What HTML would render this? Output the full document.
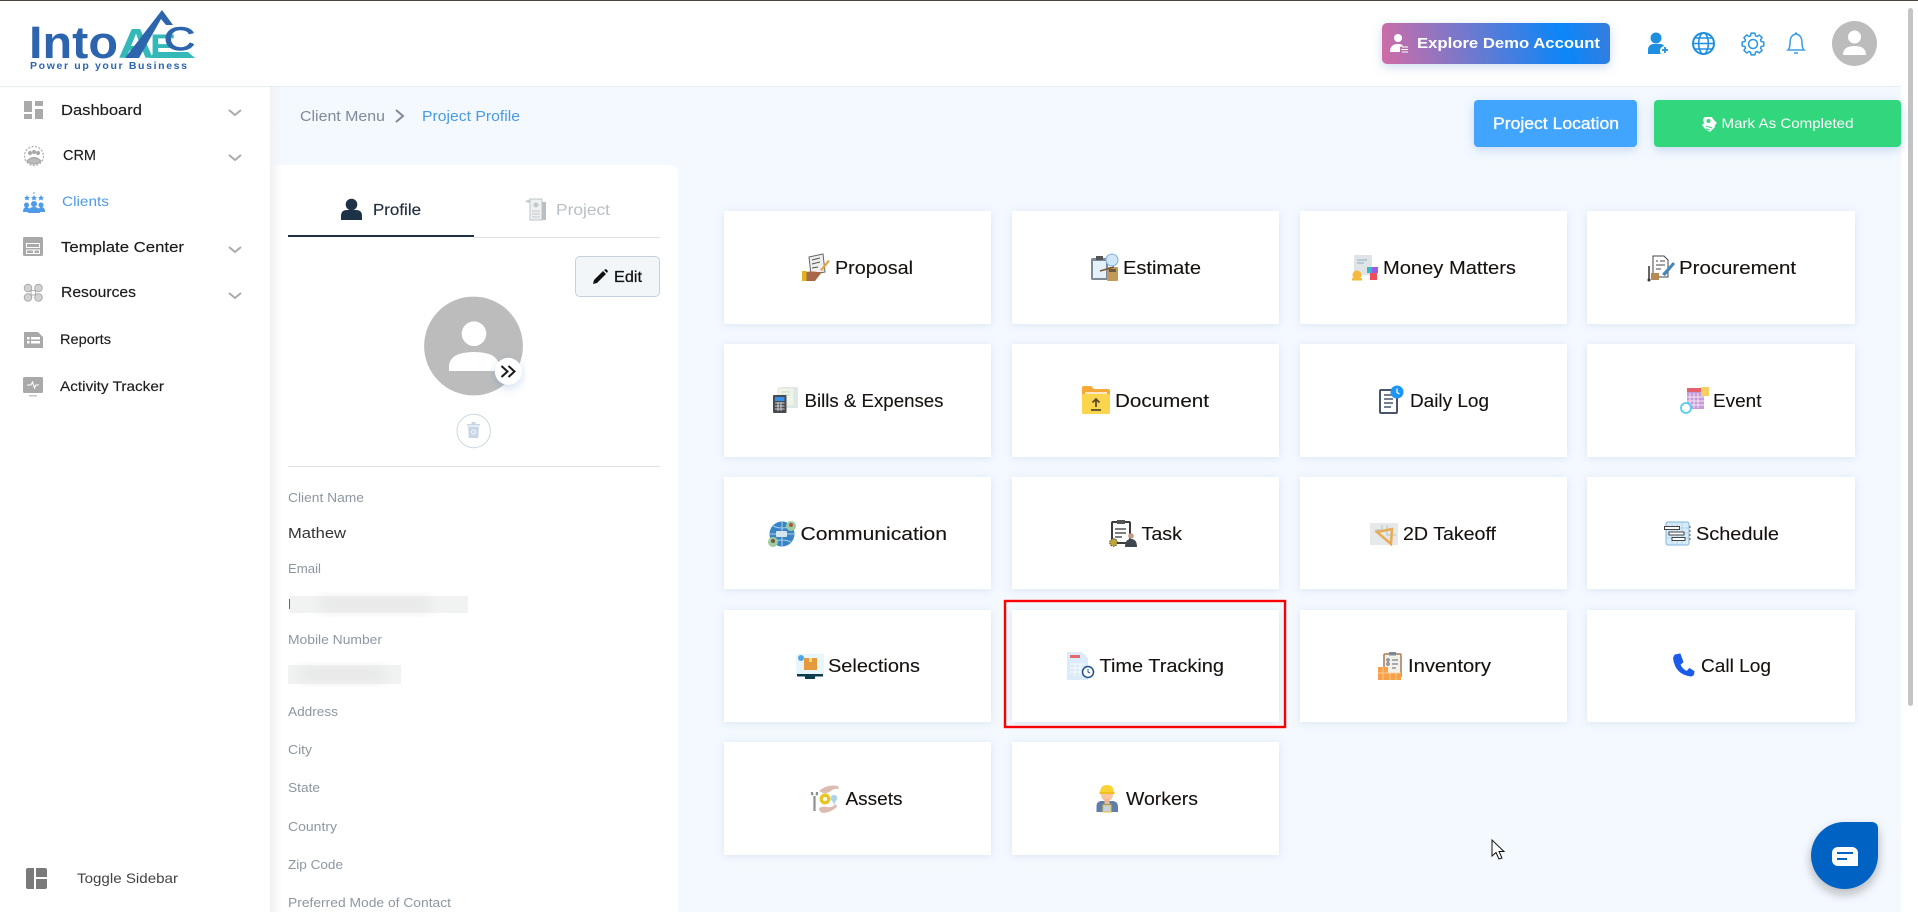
<!DOCTYPE html>
<html lang="en"><head><meta charset="utf-8"><title>Project Profile</title>
<style>
html,body{margin:0;padding:0;background:#fff;overflow:hidden;width:1918px;height:912px}
svg{display:block}
text{font-family:"Liberation Sans",sans-serif}
.c{font-size:18.5px;fill:#17120f;stroke:#17120f;stroke-width:.12px}
.s{font-size:15px;fill:#1c1c1c;stroke:#1c1c1c;stroke-width:.15px}
.l{font-size:13px;fill:#8d97a1}
</style></head><body>
<svg width="1918" height="912" viewBox="0 0 1918 912" xmlns="http://www.w3.org/2000/svg">
<defs>
<filter id="card" x="-15%" y="-15%" width="130%" height="135%"><feDropShadow dx="0" dy="1" stdDeviation="4" flood-color="#7d97b5" flood-opacity=".22"/></filter>
<filter id="btn" x="-15%" y="-30%" width="130%" height="180%"><feDropShadow dx="0" dy="3" stdDeviation="5" flood-color="#4a80c8" flood-opacity=".28"/></filter>
<filter id="chat" x="-30%" y="-30%" width="160%" height="170%"><feDropShadow dx="0" dy="5" stdDeviation="5" flood-color="#222" flood-opacity=".3"/></filter>
<filter id="bl" x="-10%" y="-50%" width="120%" height="200%"><feGaussianBlur stdDeviation="6"/></filter>
<linearGradient id="ex" gradientUnits="userSpaceOnUse" x1="1385" y1="72" x2="1612" y2="22"><stop offset="0" stop-color="#d06ca6"/><stop offset=".78" stop-color="#0a86f8"/><stop offset="1" stop-color="#3a7cdc"/></linearGradient>
<linearGradient id="sh" x1="0" x2="1"><stop offset="0" stop-color="#f0f1f2"/><stop offset="1" stop-color="#f0f1f2" stop-opacity="0"/></linearGradient>
</defs>

<!-- backgrounds -->
<rect width="1918" height="912" fill="#fff"/>
<rect x="270" y="87" width="1631" height="825" fill="#f4f9ff"/>
<rect x="0" y="0" width="1918" height="1" fill="#4a4441"/>
<rect x="0" y="86" width="1901" height="1" fill="#e8edf2"/>
<rect x="1908" y="8" width="5" height="698" rx="2.5" fill="#c4c4c4"/>

<!-- logo -->
<text x="29" y="58" font-size="45" font-weight="700" fill="#2c65ad" textLength="89" lengthAdjust="spacingAndGlyphs">Into</text>
<text x="118" y="58" font-size="42" font-weight="700" fill="#35b8b8" textLength="36" lengthAdjust="spacingAndGlyphs">A</text>
<text x="150" y="58" font-size="34" font-weight="700" fill="#35b8b8" textLength="26" lengthAdjust="spacingAndGlyphs">E</text>
<text x="164" y="50" font-size="32" fill="#2c65ad" stroke="#2c65ad" stroke-width="1" textLength="31" lengthAdjust="spacingAndGlyphs">C</text>
<polygon points="125,58 162,10 173,25 166,25 161,19 139,58" fill="#2c65ad"/>
<polygon points="150,58 195,58 188,52 154,52" fill="#35b8b8"/>
<text x="30" y="69" font-size="10.500" font-weight="700" fill="#2c65ad" textLength="157" lengthAdjust="spacing">Power up your Business</text>

<!-- sidebar -->
<g fill="#aaa">
<rect x="24" y="101" width="8" height="11"/><rect x="35" y="101" width="8" height="5"/><rect x="24" y="114" width="8" height="5"/><rect x="35" y="109" width="8" height="10"/>
</g>
<text class="s" x="61" y="115" textLength="81" lengthAdjust="spacingAndGlyphs">Dashboard</text>
<path d="M229 110l6 5 6-5" fill="none" stroke="#aaa" stroke-width="2"/>
<g fill="none" stroke="#aaa" stroke-width="1.200">
<circle cx="34" cy="156" r="9.500" stroke-dasharray="2 1.500"/><path d="M27 161q7-7 14 0q-7 6-14 0z" fill="#bbb"/><circle cx="30" cy="153" r="1.500" fill="#aaa"/><circle cx="34" cy="152" r="1.500" fill="#aaa"/><circle cx="38" cy="153" r="1.500" fill="#aaa"/>
</g>
<text class="s" x="63" y="160" textLength="33" lengthAdjust="spacingAndGlyphs">CRM</text>
<path d="M229 155l6 5 6-5" fill="none" stroke="#aaa" stroke-width="2"/>
<g fill="#4e9ae8">
<circle cx="34" cy="193" r=".8"/><path d="M27 195l1 2 2 .2-1.500 1.300.5 2-2-1-2 1 .5-2-1.500-1.300 2-.2z"/><path d="M34 195l1 2 2 .2-1.500 1.300.5 2-2-1-2 1 .5-2-1.500-1.300 2-.2z"/><path d="M41 195l1 2 2 .2-1.500 1.300.5 2-2-1-2 1 .5-2-1.500-1.300 2-.2z"/>
<circle cx="26.500" cy="205" r="2.500"/><circle cx="41" cy="205" r="2.500"/><circle cx="34" cy="204" r="3"/>
<path d="M23 212q0-5 3.500-5t3.500 5zM38 212q0-5 3.500-5t3.500 5zM28 213q0-6 6-6t6 6z"/>
</g>
<text x="62" y="206" font-size="14" fill="#4e9ae8" textLength="47" lengthAdjust="spacingAndGlyphs">Clients</text>
<rect x="23" y="237" width="20" height="19" rx="1.500" fill="#a9a9a9"/><rect x="26" y="243" width="14" height="5" fill="#fff"/><rect x="27" y="244" width="12" height="3" fill="#a9a9a9"/><rect x="26" y="249.500" width="14" height="4.500" fill="#fff"/><rect x="27" y="250.500" width="6" height="2.500" fill="#a9a9a9"/><rect x="34.500" y="250.500" width="4.500" height="2.500" fill="#a9a9a9"/>
<text class="s" x="61" y="252" textLength="123" lengthAdjust="spacingAndGlyphs">Template Center</text>
<path d="M229 247l6 5 6-5" fill="none" stroke="#aaa" stroke-width="2"/>
<g fill="#d2d2d2" stroke="#a5a5a5" stroke-width=".9"><circle cx="28" cy="288" r="3.800"/><circle cx="38.500" cy="288" r="3.800"/><circle cx="28" cy="297.500" r="3.800"/><circle cx="38.500" cy="297.500" r="3.800"/><rect x="31" y="290.500" width="4.500" height="4.500" fill="#fff"/></g>
<text class="s" x="61" y="297" textLength="75" lengthAdjust="spacingAndGlyphs">Resources</text>
<path d="M229 293l6 5 6-5" fill="none" stroke="#aaa" stroke-width="2"/>
<path d="M24 332h14l5 5v11H24z" fill="#a9a9a9"/><path d="M27 337h2.500v2.500H27zM27 341h2.500v2.500H27zM31 337h9v2.500h-9zM31 341h9v2.500h-9z" fill="#fff"/>
<text class="s" x="60" y="344" style="font-size:14px" textLength="51" lengthAdjust="spacingAndGlyphs">Reports</text>
<rect x="23" y="377" width="20" height="16" rx="1.500" fill="#a9a9a9"/><path d="M27 385h4l1.500-3 2 6 1.500-3h3" fill="none" stroke="#fff" stroke-width="1.100"/><rect x="29" y="395" width="8" height="1.500" fill="#c5c5c5"/>
<text class="s" x="60" y="391" style="font-size:14px" textLength="104" lengthAdjust="spacingAndGlyphs">Activity Tracker</text>
<path d="M28 868h6v21h-6a2 2 0 0 1-2-2v-17a2 2 0 0 1 2-2zM36 868h9a2 2 0 0 1 2 2v7H36zM36 879h11v8a2 2 0 0 1-2 2h-9z" fill="#7a7a7a"/>
<text x="77" y="883" font-size="14" fill="#444" textLength="101" lengthAdjust="spacingAndGlyphs">Toggle Sidebar</text>

<!-- header -->
<rect x="1382" y="23" width="228" height="41" rx="5" fill="url(#ex)" filter="url(#btn)"/>
<circle cx="1398" cy="38" r="4" fill="#fff"/><path d="M1390 52q0-8 8-8 4 0 5 2l-3 1v5z" fill="#fff"/><path d="M1402 47h6M1401 49.500h7M1402 52h6" stroke="#fff" stroke-width="1"/>
<text x="1417" y="48" font-size="14.500" font-weight="700" fill="#fff" textLength="183" lengthAdjust="spacingAndGlyphs">Explore Demo Account</text>
<circle cx="1656" cy="38" r="5.500" fill="#1e8fe0"/><path d="M1648 54v-4q0-6 6-6h6q3 0 4 2-4 1-4 5 0 2 1 3z" fill="#1e8fe0"/><path d="M1665 47v6M1662 50h6" stroke="#1e8fe0" stroke-width="1.800"/>
<g fill="none" stroke="#1e8fe0" stroke-width="2"><circle cx="1703.500" cy="43.500" r="10.500"/><ellipse cx="1703.500" cy="43.500" rx="4.800" ry="10.500" stroke-width="1.600"/><path d="M1693 43.500h21M1695 38h17M1695 49h17" stroke-width="1.600"/></g>
<g transform="translate(1753 44)" fill="none" stroke="#2a96e4" stroke-width="1.500" stroke-linejoin="round"><polygon points="8.130,-2.490 10.830,-1.910 10.830,1.910 8.130,2.490 7.500,3.990 9.010,6.310 6.310,9.010 3.990,7.500 2.490,8.130 1.910,10.830 -1.910,10.830 -2.490,8.130 -3.990,7.500 -6.310,9.010 -9.010,6.310 -7.500,3.990 -8.130,2.490 -10.830,1.910 -10.830,-1.910 -8.130,-2.490 -7.500,-3.990 -9.010,-6.310 -6.310,-9.010 -3.990,-7.500 -2.490,-8.130 -1.910,-10.830 1.910,-10.830 2.490,-8.130 3.990,-7.500 6.310,-9.010 9.010,-6.310 7.500,-3.990"/><circle r="4.500"/></g>
<path d="M1788 50q2-2 2-7 0-8 6-9 6 1 6 9 0 5 2 7zM1794 53h4" fill="none" stroke="#3a9de4" stroke-width="1.500"/><circle cx="1796" cy="33.500" r="1.200" fill="#3a9de4"/>
<circle cx="1854.500" cy="43.500" r="22.500" fill="#bcbcbc"/><circle cx="1854.500" cy="37" r="6.500" fill="#fff"/><path d="M1843 55q0-9 11.500-9t11.500 9z" fill="#fff"/>

<!-- breadcrumb -->
<text x="300" y="121" font-size="14.500" fill="#7f8a96" textLength="85" lengthAdjust="spacingAndGlyphs">Client Menu</text>
<path d="M396 110l7 6-7 6" fill="none" stroke="#7f8a96" stroke-width="2"/>
<text x="422" y="121" font-size="14.500" fill="#4a9ae6" textLength="98" lengthAdjust="spacingAndGlyphs">Project Profile</text>

<!-- top buttons -->
<rect x="1474" y="100" width="163" height="47" rx="4" fill="#42a5fd" filter="url(#btn)"/>
<text x="1493" y="129" font-size="16.500" fill="#fff" stroke="#fff" stroke-width=".3" textLength="126" lengthAdjust="spacingAndGlyphs">Project Location</text>
<rect x="1654" y="100" width="247" height="47" rx="4" fill="#32d67c" filter="url(#btn)"/>
<path d="M1705 117h7l1 2 4 4-2 2v2l-3 3-2 2-5-3-3-4 2-2-1-4z" fill="#fff"/><circle cx="1708.500" cy="121" r="2" fill="#32d67c"/><path d="M1706 126l6 2M1706 129l4 1" stroke="#32d67c"/>
<text x="1721.500" y="128" font-size="14" fill="#fff" textLength="132" lengthAdjust="spacingAndGlyphs">Mark As Completed</text>

<!-- profile panel -->
<path d="M270 165h400a8 8 0 0 1 8 8v739H270z" fill="#fff"/>
<rect x="270" y="87" width="12" height="825" fill="url(#sh)"/>
<circle cx="351.500" cy="204.500" r="5.800" fill="#1d3147"/><path d="M341 220v-4q0-6 6-6h9q6 0 6 6v4z" fill="#1d3147"/>
<text x="373" y="215" font-size="16" fill="#1f2d3d" stroke="#1f2d3d" stroke-width=".15" textLength="48" lengthAdjust="spacingAndGlyphs">Profile</text>
<path d="M525 201l6-2v3l-3 1z" fill="#c9cdd1"/><rect x="530" y="199" width="12" height="21" fill="#eef0f1" stroke="#bfc4c9"/><rect x="542" y="202" width="4" height="18" fill="#b9bfc5"/><circle cx="536" cy="205" r="2.500" fill="#c2c7cc"/><path d="M532 211h8M532 214h8M532 217h8" stroke="#c2c7cc"/>
<text x="556" y="215" font-size="16" fill="#b8bec5" textLength="54" lengthAdjust="spacingAndGlyphs">Project</text>
<rect x="474" y="237" width="186" height="1" fill="#dfe2e5"/><rect x="288" y="235" width="186" height="2" fill="#1f3044"/>
<rect x="575.500" y="256.500" width="84" height="40" rx="4.500" fill="#f2f6f9" stroke="#c5d0dc"/>
<path d="M593 284l1-4 9-9 3 3-9 9zM604 270l2-1 2 2-1 2z" fill="#111"/>
<text x="614" y="282" font-size="16" fill="#111" stroke="#111" stroke-width=".25" textLength="28" lengthAdjust="spacingAndGlyphs">Edit</text>
<circle cx="473.500" cy="346" r="49.400" fill="#bcbcbc"/><circle cx="474" cy="333.700" r="12.300" fill="#fff"/><path d="M449 371v-6q2-13 25-13t25 13v6z" fill="#fff"/>
<circle cx="508.300" cy="371.300" r="13.500" fill="#fff" filter="url(#btn)"/><path d="M501.500 366l6 5.500-6 5.500M508.500 366l6 5.500-6 5.500" fill="none" stroke="#1a1a1a" stroke-width="2"/>
<circle cx="473.700" cy="431" r="16.700" fill="#fff" stroke="#c9d6e3"/>
<path d="M467 424h13v1.500h-13zM471.500 422h4v2h-4zM468 426.500h11l-.8 11.500h-9.400z" fill="#c9d6e6"/><circle cx="473.500" cy="432" r="2" fill="none" stroke="#fff" stroke-width=".8"/>
<rect x="288" y="466" width="372" height="1" fill="#dfe2e5"/>

<text class="l" x="288" y="502" textLength="76" lengthAdjust="spacingAndGlyphs">Client Name</text>
<text x="288" y="538" font-size="15" fill="#333" textLength="58" lengthAdjust="spacingAndGlyphs">Mathew</text>
<text class="l" x="288" y="573" textLength="33" lengthAdjust="spacingAndGlyphs">Email</text>
<rect x="289" y="599" width="1" height="10" fill="#666"/>
<rect x="290" y="596" width="178" height="17" fill="#f1f2f2"/><rect x="320" y="598" width="110" height="13" fill="#e3e4e4" filter="url(#bl)" opacity=".8"/>
<text class="l" x="288" y="644" textLength="94" lengthAdjust="spacingAndGlyphs">Mobile Number</text>
<rect x="288" y="665" width="113" height="19" fill="#f1f2f2"/><rect x="300" y="668" width="85" height="13" fill="#e3e4e4" filter="url(#bl)" opacity=".8"/>
<text class="l" x="288" y="716" textLength="50" lengthAdjust="spacingAndGlyphs">Address</text>
<text class="l" x="288" y="754" textLength="24" lengthAdjust="spacingAndGlyphs">City</text>
<text class="l" x="288" y="792" textLength="32" lengthAdjust="spacingAndGlyphs">State</text>
<text class="l" x="288" y="831" textLength="49" lengthAdjust="spacingAndGlyphs">Country</text>
<text class="l" x="288" y="869" textLength="55" lengthAdjust="spacingAndGlyphs">Zip Code</text>
<text class="l" x="288" y="907" textLength="163" lengthAdjust="spacingAndGlyphs">Preferred Mode of Contact</text>

<!-- cards -->
<g fill="#fff" filter="url(#card)">
<rect x="724" y="211" width="267" height="113"/><rect x="1012" y="211" width="267" height="113"/><rect x="1300" y="211" width="267" height="113"/><rect x="1587" y="211" width="268" height="113"/>
<rect x="724" y="344" width="267" height="113"/><rect x="1012" y="344" width="267" height="113"/><rect x="1300" y="344" width="267" height="113"/><rect x="1587" y="344" width="268" height="113"/>
<rect x="724" y="477" width="267" height="112"/><rect x="1012" y="477" width="267" height="112"/><rect x="1300" y="477" width="267" height="112"/><rect x="1587" y="477" width="268" height="112"/>
<rect x="724" y="610" width="267" height="112"/><rect x="1012" y="610" width="267" height="112"/><rect x="1300" y="610" width="267" height="112"/><rect x="1587" y="610" width="268" height="112"/>
<rect x="724" y="742" width="267" height="113"/><rect x="1012" y="742" width="267" height="113"/>
</g>
<rect x="1005" y="601" width="280" height="126" fill="none" stroke="#ff0000" stroke-width="2.400"/>

<!-- card labels -->
<text class="c" x="835" y="274" textLength="78" lengthAdjust="spacingAndGlyphs">Proposal</text>
<text class="c" x="1123" y="274" textLength="78" lengthAdjust="spacingAndGlyphs">Estimate</text>
<text class="c" x="1383" y="274" textLength="133" lengthAdjust="spacingAndGlyphs">Money Matters</text>
<text class="c" x="1679" y="274" textLength="117" lengthAdjust="spacingAndGlyphs">Procurement</text>
<text class="c" x="804.500" y="407" textLength="139" lengthAdjust="spacingAndGlyphs">Bills &amp; Expenses</text>
<text class="c" x="1115" y="407" textLength="94" lengthAdjust="spacingAndGlyphs">Document</text>
<text class="c" x="1410" y="407" textLength="79" lengthAdjust="spacingAndGlyphs">Daily Log</text>
<text class="c" x="1713" y="407" textLength="48.500" lengthAdjust="spacingAndGlyphs">Event</text>
<text class="c" x="800.500" y="540" textLength="146.500" lengthAdjust="spacingAndGlyphs">Communication</text>
<text class="c" x="1141.500" y="540" textLength="40.500" lengthAdjust="spacingAndGlyphs">Task</text>
<text class="c" x="1403" y="540" textLength="93" lengthAdjust="spacingAndGlyphs">2D Takeoff</text>
<text class="c" x="1696" y="540" textLength="83" lengthAdjust="spacingAndGlyphs">Schedule</text>
<text class="c" x="828" y="672" textLength="92" lengthAdjust="spacingAndGlyphs">Selections</text>
<text class="c" x="1099.500" y="672" textLength="124.500" lengthAdjust="spacingAndGlyphs">Time Tracking</text>
<text class="c" x="1408" y="672" textLength="83" lengthAdjust="spacingAndGlyphs">Inventory</text>
<text class="c" x="1701" y="672" textLength="70" lengthAdjust="spacingAndGlyphs">Call Log</text>
<text class="c" x="845.500" y="805" textLength="57" lengthAdjust="spacingAndGlyphs">Assets</text>
<text class="c" x="1126" y="805" textLength="72" lengthAdjust="spacingAndGlyphs">Workers</text>

<!-- card icons -->
<!-- proposal -->
<path d="M809 257l14-3 2 18-14 3z" fill="#eee" stroke="#666"/><path d="M812 260l8-2M812 264l8-2M812 268l6-1" stroke="#555"/><path d="M820 270l8-10 2 1-8 10z" fill="#e8a33c"/><path d="M805 272q8-1 12 0l5 0-7 9h-9z" fill="#a8694a"/><rect x="802" y="271" width="4.500" height="10" fill="#e2b21c"/>
<!-- estimate -->
<rect x="1091" y="258" width="17" height="22" rx="1.500" fill="#7e8a96"/><rect x="1093" y="261" width="13" height="17" fill="#e4f0fa"/><rect x="1096" y="256" width="7" height="4" fill="#555"/><circle cx="1112" cy="260" r="6" fill="#cfe6f7" stroke="#7fb2dc"/><rect x="1107" y="267" width="11" height="14" rx="1" fill="#c49a5a"/><rect x="1109" y="269" width="7" height="3" fill="#6a5a40"/><path d="M1100 271l14-4" stroke="#7a5a3a" stroke-width="1.500"/>
<!-- money matters -->
<rect x="1354" y="255" width="18" height="20" fill="#dfe4e6"/><path d="M1357 260h10M1357 263h7" stroke="#8fb2c8"/><rect x="1367" y="267" width="6" height="6" fill="#36b7c4"/><rect x="1372" y="267" width="6" height="6" fill="#9a5ce6"/><rect x="1370" y="273" width="7" height="7" fill="#ee4e58"/><circle cx="1357" cy="275" r="4.500" fill="#f5b93f"/><rect x="1352" y="278" width="10" height="2.500" fill="#f5b93f"/>
<!-- procurement -->
<path d="M1653 256h11l4 4v17h-15z" fill="#fff" stroke="#444"/><path d="M1656 261h2M1660 261h5M1656 265h9M1656 269h5" stroke="#444"/><path d="M1662 274l11-12 2 2-10 12z" fill="#4587b8"/><rect x="1651" y="273" width="8" height="7" fill="#b58a55"/><path d="M1649 266v14" stroke="#333" stroke-width="1.500"/><circle cx="1649" cy="280" r="1.500" fill="#333"/>
<!-- bills -->
<rect x="781" y="387" width="17" height="21" fill="#dde9e4"/><rect x="778" y="388" width="16" height="18" fill="#f0f3ea" stroke="#dfe6dc"/><path d="M781 392h9M781 395h9" stroke="#c8d8c8"/><rect x="773" y="395" width="13.500" height="18" rx="1" fill="#474a4f"/><rect x="775" y="397" width="9.500" height="4" fill="#3a8fe8"/><path d="M775 403h9.500M775 406h9.500M775 409h9.500M778 402v9M781 402v9" stroke="#cfd3d6"/>
<!-- document -->
<path d="M1082 388a2 2 0 0 1 2-2h7l3 3h14a2 2 0 0 1 2 2v10h-28z" fill="#f7a937"/><rect x="1085" y="392" width="22" height="3" fill="#fde6c0"/><rect x="1082" y="394" width="28" height="20" rx="1.500" fill="#fcd54f"/><path d="M1096 399v8M1092.500 402.500l3.500-3.500 3.500 3.500M1091 410h10" fill="none" stroke="#5a4a2a" stroke-width="1.800"/>
<!-- daily log -->
<rect x="1380" y="390" width="17" height="23" rx="1" fill="#fff" stroke="#47566b" stroke-width="2"/><path d="M1384 395h8M1384 399h9M1384 403h9M1384 407h7" stroke="#47566b" stroke-width="1.400"/><circle cx="1397" cy="392" r="6.500" fill="#1c96f2"/><path d="M1397 388.500v4l2.500 1.500" fill="none" stroke="#fff" stroke-width="1.200"/>
<!-- event -->
<rect x="1687" y="389" width="17" height="20" fill="#c79ad8"/><rect x="1687" y="388" width="17" height="4" fill="#e4606a"/><path d="M1690 393v15M1694 393v15M1698 393v15M1687 397h17M1687 401h17M1687 405h17" stroke="#fff" stroke-width=".7"/><rect x="1701" y="387" width="8" height="9" fill="#f6cf62"/><circle cx="1686" cy="408" r="5" fill="#fff" stroke="#55cdf2" stroke-width="1.800"/>
<!-- communication -->
<circle cx="782" cy="534" r="12.500" fill="#3a83c4"/><path d="M770 534h24M782 522v24M773 526q9 4 18 0M773 542q9-4 18 0" stroke="#a9d0ee" fill="none"/><rect x="776" y="531" width="11" height="6" rx="1" fill="#d8e4ee"/><circle cx="791" cy="526" r="5" fill="#9fcba0"/><circle cx="791" cy="525" r="2" fill="#a65a44"/><circle cx="773" cy="542" r="5" fill="#9fcba0"/><circle cx="773" cy="541" r="2" fill="#7a5a3a"/>
<!-- task -->
<rect x="1112" y="522" width="18" height="21" rx="1" fill="#fff" stroke="#3c3c3c" stroke-width="2"/><rect x="1117" y="520" width="8" height="4" fill="#555"/><path d="M1115 529h11M1115 533h11M1115 537h7" stroke="#333" stroke-width="1.300"/><circle cx="1113.500" cy="542.500" r="3.800" fill="#c3a534" stroke="#444" stroke-dasharray="1.500 1"/><circle cx="1131" cy="536" r="2.800" fill="#c59a80"/><path d="M1125 547q0-8 6-8t6 8z" fill="#3e4650"/>
<!-- 2d takeoff -->
<rect x="1370" y="523" width="28" height="22" fill="#e6e9ea"/><path d="M1375 530h7v-5M1387 525v10h9" fill="none" stroke="#b8bec2"/><path d="M1377 532l15-3-1 15z" fill="none" stroke="#e9ac55" stroke-width="2.500"/>
<!-- schedule -->
<rect x="1666" y="522" width="23" height="23" rx="2" fill="#d8ebf8" stroke="#7fb6e0"/><path d="M1672 523v21M1677 523v21M1682 523v21M1667 528h21M1667 533h21M1667 538h21" stroke="#a9cfea" stroke-width=".7"/><g fill="#fff" stroke="#444"><rect x="1664.500" y="526.500" width="15" height="3"/><rect x="1669" y="532" width="15" height="3"/><rect x="1672" y="537.500" width="13" height="3"/></g><path d="M1690 526v16" stroke="#666" stroke-dasharray="2 2"/>
<!-- selections -->
<rect x="796" y="654" width="28" height="20" rx="1" fill="#e8f5fb"/><rect x="797" y="674" width="26" height="2.500" fill="#0d3c4f"/><rect x="805" y="676" width="10" height="3" fill="#0d3c4f"/><rect x="804" y="658" width="13" height="12" fill="#e59b3d"/><rect x="809" y="658" width="3" height="4" fill="#f8dc7a"/><circle cx="801" cy="658" r="3" fill="#4fa6e6"/>
<!-- time tracking -->
<path d="M1067 652h15l6 6v22h-21z" fill="#dcebfa"/><rect x="1070" y="655" width="10" height="3" fill="#e56a6e"/><path d="M1070 664h15M1070 668h15M1070 672h15M1075 664v12M1080 664v12" stroke="#fff" stroke-width=".8"/><circle cx="1088" cy="672" r="5.500" fill="#fff" stroke="#1f4f90" stroke-width="1.500"/><path d="M1088 669v3l2 1" fill="none" stroke="#1f4f90"/>
<!-- inventory -->
<rect x="1384" y="654" width="17" height="23" rx="1" fill="#f3f0ea" stroke="#a97a52" stroke-width="1.500"/><rect x="1389" y="652" width="7" height="3.500" fill="#7a8a9a"/><path d="M1392 660h6M1392 664h6M1392 668h4" stroke="#5a6a7a"/><circle cx="1388" cy="660" r="1.200" fill="none" stroke="#5a6a7a"/><circle cx="1388" cy="664" r="1.200" fill="none" stroke="#5a6a7a"/><path d="M1378 667h10v6h13v7h-23z" fill="#f6a04a"/><path d="M1378 673h23M1383 667v13M1390 673v7M1396 673v7" stroke="#fbd7a8" stroke-width=".7"/>
<!-- call log -->
<path d="M1675 655l5-1 3 8-3 2.500q2 5 7 7l2.500-3 4.500 3-.5 3q-1 1.500-3 1.500-15-2-17-18z" fill="#1c5bea" stroke="#1c5bea"/>
<!-- assets -->
<path d="M819 791q8-7 19-5l1 3q-5-1-8 2-5 3-8 2zM819 808q4-2 8-1 5 1 9-3l1 3q-7 6-14 6-4-1-4-5z" fill="#dcbcb0"/><path d="M813 795l-1-1v-2m4 3l1-1v-2M814.500 796v15" stroke="#8a8f96" stroke-width="2.200" fill="none"/><circle cx="825" cy="799" r="5.500" fill="#e8c520"/><circle cx="825" cy="799" r="2" fill="#fff"/><path d="M835 795q-3-.5-4 2t2 5l1 4 1-4q3-3 2-5t-2-2z" fill="#a8d4ee"/>
<!-- workers -->
<path d="M1096.500 812v-6q0-4 4-5h13q4 1 4.500 5v6z" fill="#5f7ea8"/><rect x="1103" y="805" width="8" height="7" fill="#c5d2e4" stroke="#e4c030"/><circle cx="1107" cy="795" r="6" fill="#f8c7a0"/><rect x="1104.500" y="799" width="5" height="5" fill="#f0b890"/><path d="M1100 793q0-8 7-8t7 8z" fill="#fbd233"/><rect x="1099.500" y="792" width="15" height="2" fill="#f2be1f"/>

<!-- chat -->
<path d="M1844.500 822H1872a6 6 0 0 1 6 6v27.500a33.500 33.500 0 0 1-67 0 33.500 33.500 0 0 1 33.500-33.500z" fill="#0063c4" filter="url(#chat)"/>
<path d="M1838 847h14a6 6 0 0 1 6 6v13h-20a6 6 0 0 1-6-6v-7a6 6 0 0 1 6-6z" fill="#fff"/><path d="M1837 853h16M1837 859h10" stroke="#0063c4" stroke-width="2"/>

<!-- cursor -->
<path d="M1492 840v16l4-3.500 3 6.500 3-1-3-6.500h5z" fill="#fff" stroke="#111" stroke-width="1"/>
</svg>
</body></html>
